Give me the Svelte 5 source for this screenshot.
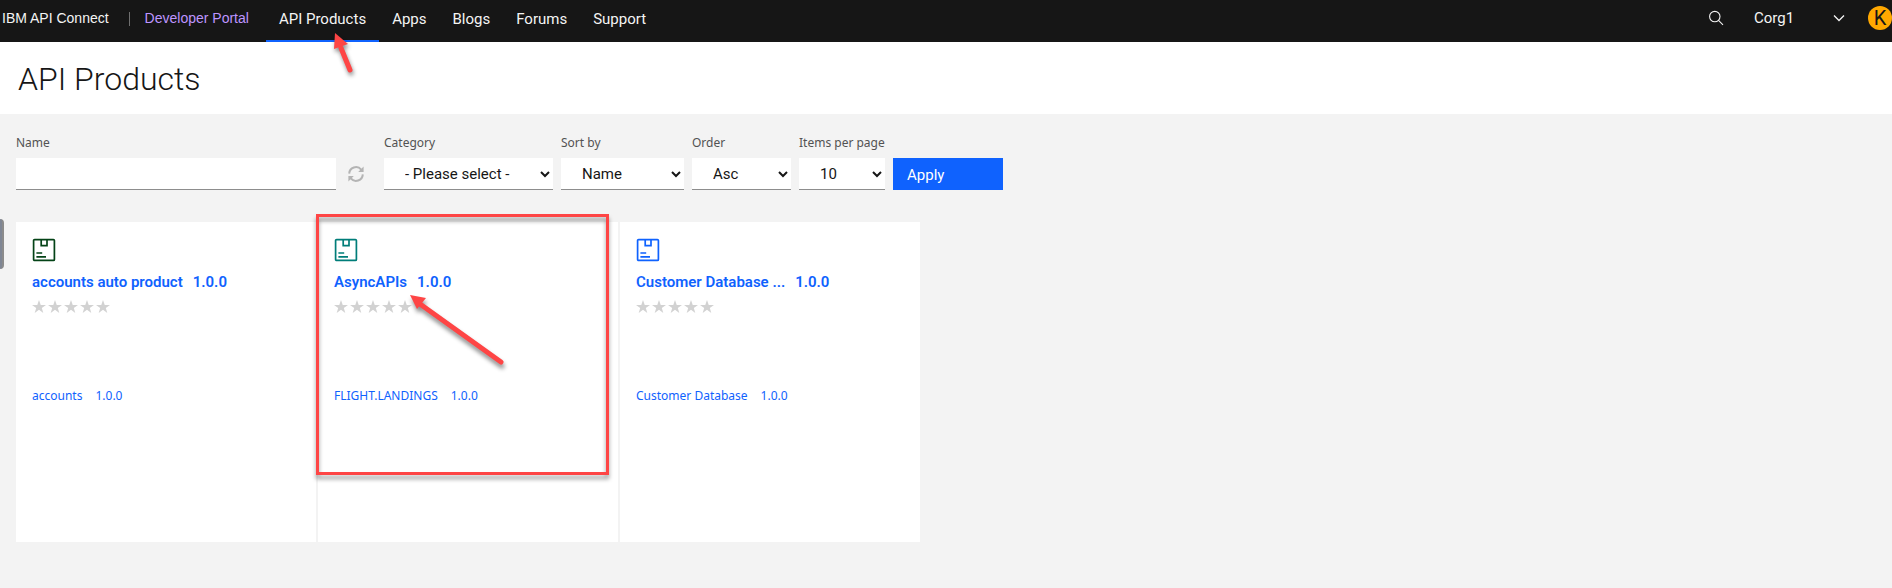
<script>
  const nav = ['API Products', 'Apps', 'Blogs', 'Forums', 'Support'];
  const filters = [
    { id: 'category', label: 'Category', value: '- Please select -', width: 169 },
    { id: 'sort', label: 'Sort by', value: 'Name', width: 123 },
    { id: 'order', label: 'Order', value: 'Asc', width: 99 },
    { id: 'items', label: 'Items per page', value: '10', width: 86 }
  ];
  const products = [
    { name: 'accounts auto product', version: '1.0.0', color: '#044317', api: 'accounts', apiVersion: '1.0.0' },
    { name: 'AsyncAPIs', version: '1.0.0', color: '#007d79', api: 'FLIGHT.LANDINGS', apiVersion: '1.0.0', marked: true },
    { name: 'Customer Database ...', version: '1.0.0', color: '#0f62fe', api: 'Customer Database', apiVersion: '1.0.0' }
  ];
</script>

<header>
  <a class="brand" href="#home">IBM API Connect</a>
  <span class="divider"></span>
  <a class="portal" href="#portal">Developer Portal</a>
  <nav>
    {#each nav as item, i}
      <a href="#{item}" class:active={i === 0}>{item}
        {#if i === 0}
          <svg class="pointer" width="32" height="52" viewBox="0 0 32 52" aria-hidden="true">
            <path d="M12 16 L21 38" stroke="#fe4545" stroke-width="5" stroke-linecap="round" />
            <path d="M6 1 L19 12 L5 17 Z" fill="#fe4545" />
          </svg>
        {/if}
      </a>
    {/each}
  </nav>
  <div class="account">
    <button class="search" aria-label="Search">
      <svg width="16" height="16" viewBox="0 0 16 16" fill="none" stroke="#f4f4f4" stroke-width="1.1">
        <circle cx="6.8" cy="6.6" r="5.2" /><path d="M10.5 10.4 L15 14.8" />
      </svg>
    </button>
    <button class="org">
      <span>Corg1</span>
      <svg width="12" height="12" viewBox="0 0 12 12" fill="none" stroke="#f4f4f4" stroke-width="1.3">
        <path d="M1 3.5 L6 8.5 L11 3.5" />
      </svg>
    </button>
    <button class="avatar" aria-label="Account K">K</button>
  </div>
</header>

<div class="heading"><h1>API Products</h1></div>

<main>
  <button class="drawer" aria-label="Open sidebar"></button>
  <form onsubmit={(e) => e.preventDefault()}>
    <div class="field name">
      <label for="name">Name</label>
      <input id="name" type="text" />
    </div>
    <button class="reset" type="reset" aria-label="Reset">
      <svg width="16" height="16" viewBox="0 0 16 16" fill="none" stroke="#b4b4b4" stroke-width="2">
        <path d="M1.2 7.6 A6.8 6.8 0 0 1 13.2 3.6" />
        <path d="M14.8 8.4 A6.8 6.8 0 0 1 2.8 12.4" />
        <path d="M15.6 0.6 V6 H10.2 Z M0.4 15.4 V10 H5.8 Z" fill="#b4b4b4" stroke="none" />
      </svg>
    </button>
    {#each filters as f}
      <div class="field">
        <label for={f.id}>{f.label}</label>
        <select id={f.id} style="width: {f.width}px"><option>{f.value}</option></select>
      </div>
    {/each}
    <button class="apply" type="submit">Apply</button>
  </form>

  <div class="cards">
    {#each products as p}
      <article>
        <svg class="icon" width="24" height="24" viewBox="0 0 24 24" fill="none" stroke={p.color} stroke-width="1.7" aria-hidden="true">
          <rect x="1.6" y="1.6" width="20.8" height="20.8" rx="1" />
          <path d="M9.2 2 V7.6 H15 V2 M4.4 15 H10.2 M4.4 18.8 H14" />
        </svg>
        <h2><a href="#{p.name}">{p.name}</a><a href="#{p.name}">{p.version}</a></h2>
        <div class="stars">
          {#each Array(5) as _}
            <svg width="14" height="13" viewBox="0 0 13 12" aria-hidden="true">
              <path d="M6.5 0 L8.1 4.5 H13 L9.1 7.3 L10.5 12 L6.5 9.1 L2.5 12 L3.9 7.3 L0 4.5 H4.9 Z" fill="#d2d2d2" />
            </svg>
          {/each}
        </div>
        <p class="api"><a href="#{p.api}">{p.api}</a><a href="#{p.api}">{p.apiVersion}</a></p>
        {#if p.marked}
          <div class="mark"></div>
          <svg class="mark-arrow" width="108" height="88" viewBox="0 0 108 88" aria-hidden="true">
            <path d="M12 11 L93 69" stroke="#fe4545" stroke-width="5" stroke-linecap="round" />
            <path d="M2 2 L18 5 L9 16 Z" fill="#fe4545" />
          </svg>
        {/if}
      </article>
    {/each}
  </div>
</main>

<style>
  :global(body) {
    background: #f3f3f3;
    color: #161616;
    font: 15px/20px Roboto, sans-serif;
  }
  a {
    text-decoration: none;
    color: inherit;
  }
  button, select, input {
    font: inherit;
    border: 0;
    border-radius: 0;
    padding: 0;
    margin: 0;
    background: none;
    color: inherit;
  }
  h1, h2, p {
    margin: 0;
  }

  header {
    display: flex;
    align-items: center;
    height: 42px;
    background: #161616;
    color: #f4f4f4;
    white-space: nowrap;
  }
  .brand, .portal {
    font: 14px/20px "Liberation Sans", sans-serif;
    padding-bottom: 6px;
  }
  .brand {
    padding-left: 2px;
  }
  .divider {
    width: 1px;
    height: 14px;
    margin: 0 15px 4px 20px;
    background: #6f6f6f;
  }
  .portal {
    color: #be95ff;
  }
  nav {
    display: flex;
    align-self: stretch;
    margin-left: 17px;
  }
  nav a {
    position: relative;
    box-sizing: border-box;
    padding: 9px 13px 0;
    height: 42px;
  }
  nav a.active {
    border-bottom: 2px solid #0f62fe;
  }
  .pointer {
    position: absolute;
    left: 63px;
    top: 32px;
    z-index: 2;
    overflow: visible;
    fill: none;
    filter: drop-shadow(1px 3px 2px rgba(0, 0, 0, 0.45));
  }
  .account {
    display: flex;
    align-items: center;
    margin-left: auto;
    padding-bottom: 6px;
  }
  .search {
    display: flex;
    margin-right: 30px;
  }
  .org {
    display: flex;
    align-items: center;
    justify-content: space-between;
    width: 91px;
    margin-right: 23px;
  }
  .avatar {
    width: 24px;
    height: 24px;
    border-radius: 50%;
    background: #ffa800;
    color: #161616;
    font-size: 20px;
    line-height: 24px;
  }

  .heading {
    background: #fff;
    padding: 17px 18px 15px;
  }
  h1 {
    font-size: 32px;
    line-height: 40px;
    font-weight: 300;
  }

  main {
    position: relative;
    padding: 21px 16px 46px;
  }
  .drawer {
    position: absolute;
    left: 0;
    top: 105px;
    width: 4px;
    height: 50px;
    border-radius: 0 4px 4px 0;
    background: #7f8694;
    border-right: 2px solid #8b8b8b;
  }
  form {
    display: flex;
    align-items: flex-end;
    gap: 8px;
  }
  .field {
    display: flex;
    flex-direction: column;
  }
  label {
    font: 12px/16px "Noto Sans", sans-serif;
    color: #525252;
    margin-bottom: 7px;
    white-space: nowrap;
  }
  .name {
    width: 320px;
    margin-right: 4px;
  }
  input, select {
    box-sizing: border-box;
    height: 32px;
    background: #fff;
    border-bottom: 1px solid #8d8d8d;
  }
  select {
    padding-left: 17px;
  }
  .reset {
    display: flex;
    margin: 0 12px 8px 0;
  }
  .apply {
    width: 110px;
    height: 32px;
    padding: 2px 14px 0;
    background: #0f62fe;
    color: #fff;
    text-align: left;
  }

  .cards {
    display: flex;
    flex-wrap: wrap;
    gap: 2px;
    margin-top: 32px;
  }
  article {
    position: relative;
    box-sizing: border-box;
    width: 300px;
    min-height: 320px;
    padding: 16px;
    background: #fff;
    color: #0f62fe;
  }
  .icon {
    display: block;
  }
  h2 {
    display: flex;
    gap: 10px;
    margin-top: 10px;
    font-size: 15px;
    line-height: 20px;
    font-weight: 600;
  }
  .stars {
    display: flex;
    gap: 2px;
    margin-top: 8px;
  }
  .api {
    display: flex;
    gap: 13px;
    margin-top: 75px;
    font: 12px/16px "Noto Sans", sans-serif;
  }
  .mark {
    position: absolute;
    left: -2px;
    top: -8px;
    z-index: 1;
    box-sizing: border-box;
    width: 293px;
    height: 261px;
    border: 3px solid #fe4545;
    filter: drop-shadow(0 4px 2px rgba(0, 0, 0, 0.4));
    pointer-events: none;
  }
  .mark-arrow {
    position: absolute;
    left: 90px;
    top: 71px;
    z-index: 1;
    fill: none;
    overflow: visible;
    filter: drop-shadow(1px 4px 2px rgba(0, 0, 0, 0.45));
    pointer-events: none;
  }
</style>
